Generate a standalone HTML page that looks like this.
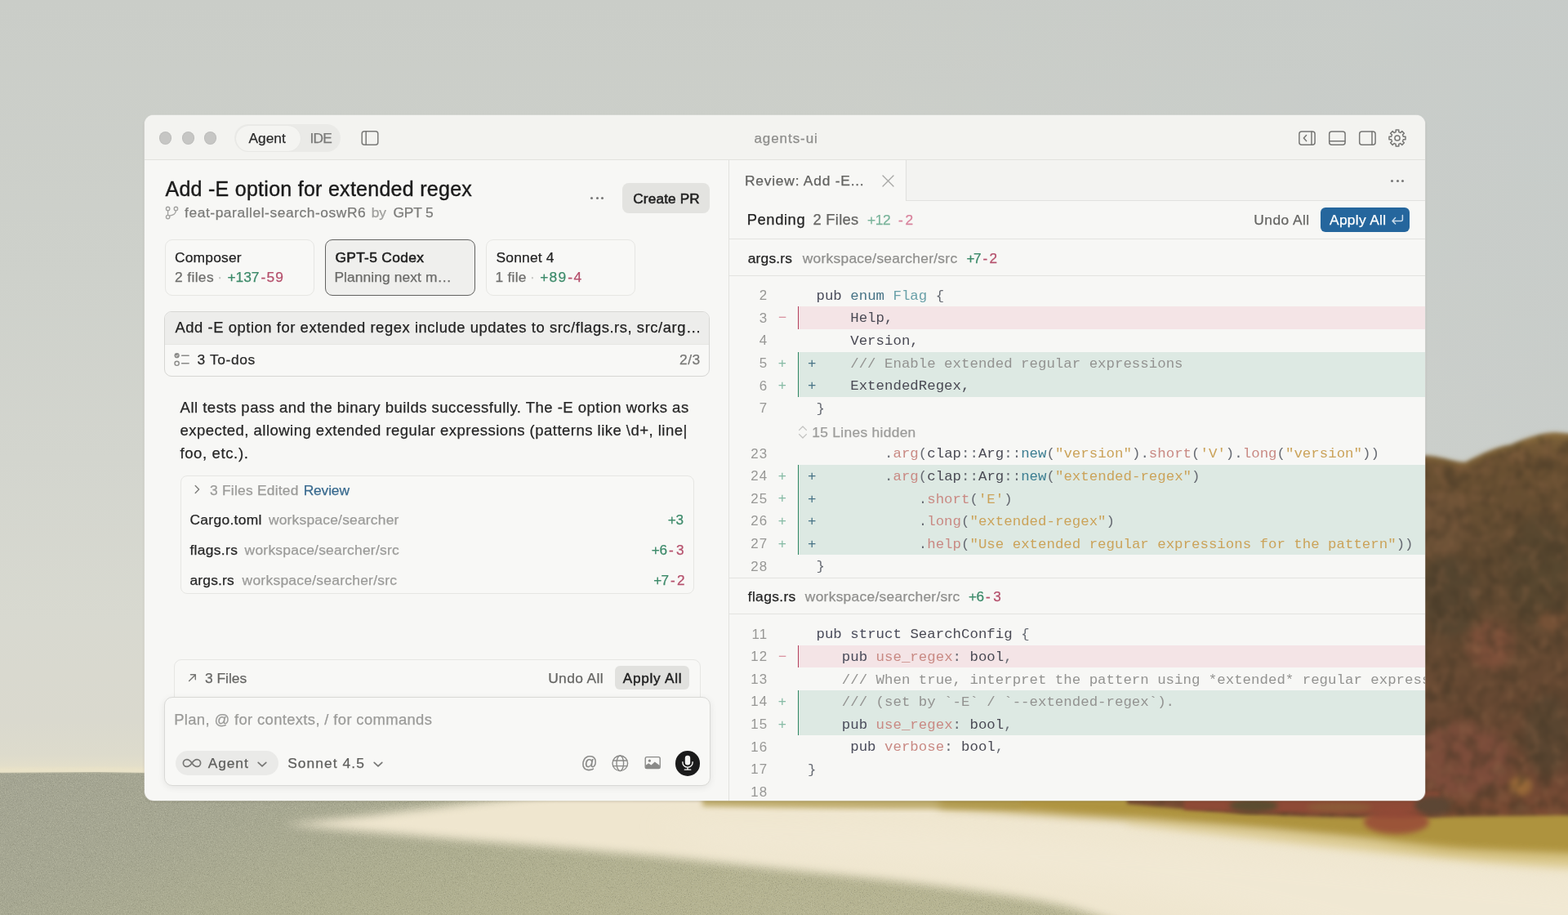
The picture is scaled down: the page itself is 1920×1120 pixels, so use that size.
<!DOCTYPE html>
<html lang="en">
<head>
<meta charset="utf-8">
<title>agents-ui</title>
<style>
*{box-sizing:border-box;margin:0;padding:0}
html,body{width:1920px;height:1120px;overflow:hidden;background:#cbcdc6}
body{font-family:"Liberation Sans",Arial,sans-serif;color:#232323;position:relative}
#bg{position:absolute;left:0;top:0;width:1920px;height:1120px;display:block}
#win{position:absolute;left:177px;top:141px;width:1568px;height:839px;border-radius:11px;background:#f7f7f5;overflow:hidden;will-change:transform;box-shadow:0 0 0 1px rgba(255,255,255,.25),0 1px 3px rgba(40,30,10,.22)}
#titlebar,#left,#right{position:absolute;left:0;top:0;width:1568px;height:839px;pointer-events:none}
.t{position:absolute;white-space:pre;display:block;-webkit-text-stroke:0.25px currentColor}
.b{position:absolute;display:block}
.mono{font-family:"Liberation Mono","DejaVu Sans Mono",monospace}
.row{position:absolute;left:716px;width:852px;height:27.6px}
.ln{position:absolute;white-space:pre;display:block;text-align:right}
.code{position:absolute;white-space:pre;display:block;font-family:"Liberation Mono","DejaVu Sans Mono",monospace}
.k{color:#4a4c5b}.k2{color:#477386}.ty{color:#69a0a8}.p{color:#676b73}.c{color:#939391}
.f{color:#c98a84}.s{color:#cba35a}.n{color:#3b7d91}.d{color:#4a4a54}

</style>
</head>
<body>
<svg id="bg" width="1920" height="1120" viewBox="0 0 1920 1120" color-interpolation-filters="sRGB">
<defs>
<linearGradient id="sky" x1="0" y1="0" x2="0" y2="1">
<stop offset="0" stop-color="#cacdc8"/><stop offset="0.3" stop-color="#ced1cb"/><stop offset="0.5" stop-color="#d3d5ce"/><stop offset="0.68" stop-color="#d8d9d0"/><stop offset="0.79" stop-color="#dad9ce"/><stop offset="0.825" stop-color="#dddbcc"/><stop offset="0.843" stop-color="#e6e0c9"/>
</linearGradient>
<linearGradient id="skyr" x1="0" y1="0" x2="1" y2="0">
<stop offset="0.55" stop-color="#c6cbc9" stop-opacity="0"/><stop offset="1" stop-color="#c6cbc9" stop-opacity="0.75"/>
</linearGradient>
<linearGradient id="gnd" x1="0" y1="0" x2="1" y2="0.25">
<stop offset="0" stop-color="#a3a493"/><stop offset="0.2" stop-color="#a6a792"/><stop offset="0.4" stop-color="#aeae90"/><stop offset="0.6" stop-color="#b5b391"/><stop offset="1" stop-color="#bab794"/>
</linearGradient>
<linearGradient id="tree" x1="0" y1="0" x2="0" y2="1">
<stop offset="0" stop-color="#7d6139"/><stop offset="0.07" stop-color="#6b5132"/><stop offset="0.35" stop-color="#604a31"/><stop offset="0.7" stop-color="#664832"/><stop offset="0.92" stop-color="#714833"/><stop offset="1" stop-color="#7a4b33"/>
</linearGradient>
<filter id="b2" x="-10%" y="-30%" width="120%" height="160%"><feGaussianBlur stdDeviation="2"/></filter>
<filter id="b3" x="-10%" y="-30%" width="120%" height="160%"><feGaussianBlur stdDeviation="3"/></filter>
<filter id="b6" x="-10%" y="-30%" width="120%" height="160%"><feGaussianBlur stdDeviation="6"/></filter>
<filter id="b14" x="-20%" y="-30%" width="140%" height="160%"><feGaussianBlur stdDeviation="14"/></filter>
<filter id="grainD" x="0" y="0" width="100%" height="100%">
<feTurbulence type="fractalNoise" baseFrequency="0.75" numOctaves="2" seed="7"/>
<feColorMatrix type="matrix" values="0 0 0 0 0.50  0 0 0 0 0.50  0 0 0 0 0.42  3 0 0 0 -1.55"/>
</filter>
<filter id="grainL" x="0" y="0" width="100%" height="100%">
<feTurbulence type="fractalNoise" baseFrequency="0.75" numOctaves="2" seed="19"/>
<feColorMatrix type="matrix" values="0 0 0 0 0.80  0 0 0 0 0.80  0 0 0 0 0.70  3 0 0 0 -1.55"/>
</filter>
<filter id="leaf" x="0" y="0" width="100%" height="100%">
<feTurbulence type="fractalNoise" baseFrequency="0.06 0.05" numOctaves="4" seed="11"/>
<feColorMatrix type="matrix" values="0 0 0 0 0.27  0 0 0 0 0.22  0 0 0 0 0.15  2.6 0 0 0 -1.1"/>
</filter>
<filter id="leaf2" x="0" y="0" width="100%" height="100%">
<feTurbulence type="fractalNoise" baseFrequency="0.07 0.06" numOctaves="4" seed="31"/>
<feColorMatrix type="matrix" values="0 0 0 0 0.56  0 0 0 0 0.40  0 0 0 0 0.28  0 2.6 0 0 -1.25"/>
</filter>
<clipPath id="tc"><path d="M1380 984 L1380 600 C1500 570 1650 556 1745 558 C1770 560 1785 568 1795 566 C1815 556 1830 548 1850 545 C1870 536 1890 530 1905 530 L1960 534 L1960 998 C1900 998 1830 999 1770 1000 C1700 1003 1600 1000 1520 996 C1470 992 1420 988 1380 984Z"/></clipPath>
</defs>
<rect width="1920" height="1120" fill="url(#sky)"/>
<rect width="1920" height="620" fill="url(#skyr)"/>
<!-- ground -->
<path d="M-20 946 L120 945 L260 947 L330 943 L400 946 L560 948 L1920 960 L1920 1140 L-20 1140Z" fill="url(#gnd)"/>
<path d="M-20 943 L120 942 L260 944 L330 940 L400 943 L560 945" fill="none" stroke="#ede5c6" stroke-width="4" opacity="0.8" filter="url(#b2)"/>
<g opacity="0.5"><rect x="0" y="946" width="1920" height="174" filter="url(#grainD)"/><rect x="0" y="946" width="1920" height="174" filter="url(#grainL)"/></g>
<!-- sand -->
<path d="M345 1009 C420 1003 500 992 600 980 L700 968 L1960 960 L1960 1160 L1440 1160 C1380 1130 1320 1112 1280 1104 C1180 1086 1060 1074 960 1064 C850 1052 740 1042 640 1034 C540 1026 430 1016 345 1009Z" fill="#efe6cf" filter="url(#b6)"/>
<path d="M800 1010 C1000 1000 1300 1020 1600 1050 C1750 1066 1850 1074 1960 1086 L1960 1160 L1700 1160 C1500 1100 1200 1060 900 1040Z" fill="#f2ead6" opacity="0.6" filter="url(#b14)"/>
<!-- golden grass band -->
<path d="M1150 972 L1960 972 L1960 1050 C1900 1048 1840 1046 1780 1042 C1740 1038 1700 1032 1670 1028 C1630 1024 1590 1020 1560 1017 C1500 1012 1450 1008 1400 1004 C1300 998 1220 992 1150 988Z" fill="#ae933e" filter="url(#b6)"/>
<path d="M1380 1004 C1500 1012 1700 1030 1800 1040 L1960 1046 L1960 1064 C1860 1062 1700 1046 1380 1008Z" fill="#d0b968" opacity="0.6" filter="url(#b6)"/>
<path d="M860 974 L1250 974 L1250 989 C1150 991 1000 990 860 987Z" fill="#b09a4e" opacity="0.75" filter="url(#b3)"/>
<!-- trees -->
<g filter="url(#b2)">
<path d="M1380 984 L1380 600 C1500 570 1650 556 1745 558 C1770 560 1785 568 1795 566 C1815 556 1830 548 1850 545 C1870 536 1890 530 1905 530 L1960 534 L1960 998 C1900 998 1830 999 1770 1000 C1700 1003 1600 1000 1520 996 C1470 992 1420 988 1380 984Z" fill="url(#tree)"/>
<g clip-path="url(#tc)">
<ellipse cx="1825" cy="790" rx="28" ry="30" fill="#905540" opacity="0.6" filter="url(#b6)"/>
<ellipse cx="1790" cy="930" rx="60" ry="45" fill="#865040" opacity="0.6" filter="url(#b6)"/>
<ellipse cx="1775" cy="730" rx="35" ry="50" fill="#514430" opacity="0.7" filter="url(#b6)"/>
<ellipse cx="1885" cy="700" rx="40" ry="70" fill="#53452f" opacity="0.65" filter="url(#b6)"/>
<ellipse cx="1895" cy="900" rx="30" ry="50" fill="#514430" opacity="0.65" filter="url(#b6)"/>
<ellipse cx="1862" cy="962" rx="14" ry="12" fill="#a8763a" opacity="0.7" filter="url(#b3)"/>
<ellipse cx="1900" cy="760" rx="18" ry="12" fill="#8a5a3c" opacity="0.6" filter="url(#b3)"/>
<ellipse cx="1770" cy="640" rx="30" ry="40" fill="#7a5a3e" opacity="0.5" filter="url(#b6)"/>
<rect x="1380" y="520" width="580" height="490" filter="url(#leaf)" opacity="0.55"/>
<rect x="1380" y="520" width="580" height="490" filter="url(#leaf2)" opacity="0.4"/>
</g>
</g>
<path d="M1745 560 C1770 562 1785 570 1795 568 C1815 558 1830 550 1850 547 C1870 538 1890 532 1905 532 L1925 534" fill="none" stroke="#9c7d42" stroke-width="5" opacity="0.5" filter="url(#b3)"/>
<!-- shrubs under window -->
<path d="M1450 970 L1762 970 L1762 992 C1700 997 1600 996 1450 991Z" fill="#8e4a36" filter="url(#b2)"/>
<ellipse cx="1535" cy="986" rx="30" ry="8" fill="#5a4c30" filter="url(#b3)"/>
<ellipse cx="1640" cy="988" rx="40" ry="6" fill="#8a6238" opacity="0.7" filter="url(#b3)"/>
<ellipse cx="1754" cy="986" rx="22" ry="12" fill="#5c4634" filter="url(#b3)"/>
<ellipse cx="1710" cy="1006" rx="40" ry="15" fill="#984a38" opacity="0.85" filter="url(#b3)"/>
</svg>
<div id="win">
<header id="titlebar">
<div class="b" style="left:0.00px;top:0.00px;width:1568.00px;height:55.20px;background:#f3f3f0;border-bottom:1px solid #e2e2de;"></div>
<div class="b" style="left:18.00px;top:20.40px;width:15.20px;height:15.20px;border-radius:50%;background:#c6c6c4;box-shadow:inset 0 0 0 1px rgba(0,0,0,.05);"></div>
<div class="b" style="left:45.70px;top:20.40px;width:15.20px;height:15.20px;border-radius:50%;background:#c6c6c4;box-shadow:inset 0 0 0 1px rgba(0,0,0,.05);"></div>
<div class="b" style="left:73.30px;top:20.40px;width:15.20px;height:15.20px;border-radius:50%;background:#c6c6c4;box-shadow:inset 0 0 0 1px rgba(0,0,0,.05);"></div>
<div class="b" style="left:110.00px;top:11.30px;width:129.60px;height:33.60px;border-radius:17px;background:#eaeae7;"></div>
<div class="b" style="left:111.50px;top:12.60px;width:79.00px;height:31.00px;border-radius:15.5px;background:#f4f4f1;box-shadow:0 0 1.5px rgba(0,0,0,.05);"></div>
<span class="t" style="left:127.40px;top:17.00px;font-size:17.3px;line-height:22px;color:#2a2a2a;letter-spacing:0.060px;">Agent</span>
<span class="t" style="left:202.60px;top:17.00px;font-size:17.3px;line-height:22px;color:#7a7a78;letter-spacing:-0.791px;">IDE</span>
<svg class="b" style="left:264.00px;top:17.00px;" width="24" height="22" viewBox="0 0 24 22"><rect x="2.2" y="2.8" width="19.6" height="16.4" rx="3" fill="none" stroke="#7a7a78" stroke-width="1.5"/><path d="M7.2 3v16" stroke="#7a7a78" stroke-width="1.5"/></svg>
<span class="t" style="left:746.50px;top:17.60px;font-size:17px;line-height:21px;color:#8d8d8b;letter-spacing:0.918px;">agents-ui</span>
<svg class="b" style="left:1412.00px;top:17.00px;" width="24" height="22" viewBox="0 0 24 22"><rect x="1.9" y="3" width="19.2" height="16.2" rx="3" fill="none" stroke="#777775" stroke-width="1.5" stroke-linecap="round" stroke-linejoin="round"/><path d="M17 3.2v15.8" fill="none" stroke="#777775" stroke-width="1.5" stroke-linecap="round" stroke-linejoin="round"/><path d="M10.6 7.6L7.4 11.1l3.2 3.5" fill="none" stroke="#777775" stroke-width="1.5" stroke-linecap="round" stroke-linejoin="round"/></svg>
<svg class="b" style="left:1449.00px;top:17.00px;" width="24" height="22" viewBox="0 0 24 22"><rect x="1.7" y="3" width="19.4" height="16.2" rx="3" fill="none" stroke="#777775" stroke-width="1.5" stroke-linecap="round" stroke-linejoin="round"/><path d="M1.9 14.8h19" fill="none" stroke="#777775" stroke-width="1.5" stroke-linecap="round" stroke-linejoin="round"/></svg>
<svg class="b" style="left:1486.00px;top:17.00px;" width="24" height="22" viewBox="0 0 24 22"><rect x="1.7" y="3" width="19.4" height="16.2" rx="3" fill="none" stroke="#777775" stroke-width="1.5" stroke-linecap="round" stroke-linejoin="round"/><path d="M17 3.2v15.8" fill="none" stroke="#777775" stroke-width="1.5" stroke-linecap="round" stroke-linejoin="round"/></svg>
<svg class="b" style="left:1522.00px;top:16.00px;" width="24" height="24" viewBox="0 0 24 24"><path d="M10.17 1.97 L13.83 1.97 L13.83 4.62 L15.92 5.49 L17.80 3.61 L20.39 6.20 L18.51 8.08 L19.38 10.17 L22.03 10.17 L22.03 13.83 L19.38 13.83 L18.51 15.92 L20.39 17.80 L17.80 20.39 L15.92 18.51 L13.83 19.38 L13.83 22.03 L10.17 22.03 L10.17 19.38 L8.08 18.51 L6.20 20.39 L3.61 17.80 L5.49 15.92 L4.62 13.83 L1.97 13.83 L1.97 10.17 L4.62 10.17 L5.49 8.08 L3.61 6.20 L6.20 3.61 L8.08 5.49 L10.17 4.62Z" fill="none" stroke="#777775" stroke-width="1.5" stroke-linecap="round" stroke-linejoin="round"/><circle cx="12" cy="12" r="3.1" fill="none" stroke="#777775" stroke-width="1.5" stroke-linecap="round" stroke-linejoin="round"/></svg>
</header>
<section id="left">
<div class="b" style="left:714.90px;top:55.00px;width:1.40px;height:784.00px;background:#e2e2df;"></div>
<h1 class="t" style="left:25.50px;top:74.80px;font-size:25px;line-height:31px;color:#1b1b1b;letter-spacing:0.271px;font-weight:400;-webkit-text-stroke:0.4px #1b1b1b;">Add -E option for extended regex</h1>
<svg class="b" style="left:24.00px;top:110.00px;" width="19" height="19" viewBox="0 0 19 19"><circle cx="4.6" cy="4.4" r="2.2" fill="none" stroke="#a3a3a1" stroke-width="1.4" stroke-linecap="round" stroke-linejoin="round"/><circle cx="14.4" cy="4.4" r="2.2" fill="none" stroke="#a3a3a1" stroke-width="1.4" stroke-linecap="round" stroke-linejoin="round"/><circle cx="4.6" cy="14.6" r="2.2" fill="none" stroke="#a3a3a1" stroke-width="1.4" stroke-linecap="round" stroke-linejoin="round"/><path d="M4.6 6.6v5.8" fill="none" stroke="#a3a3a1" stroke-width="1.4" stroke-linecap="round" stroke-linejoin="round"/><path d="M14.4 6.6c0 4.2-2.6 5.2-7.6 6.6" fill="none" stroke="#a3a3a1" stroke-width="1.4" stroke-linecap="round" stroke-linejoin="round"/></svg>
<span class="t" style="left:49.10px;top:108.20px;font-size:17.4px;line-height:22px;color:#7b7b79;letter-spacing:0.551px;">feat-parallel-search-oswR6</span>
<span class="t" style="left:277.80px;top:108.20px;font-size:17.4px;line-height:22px;color:#a0a09e;letter-spacing:-0.172px;">by</span>
<span class="t" style="left:304.40px;top:108.20px;font-size:17.4px;line-height:22px;color:#7b7b79;letter-spacing:-0.195px;">GPT 5</span>
<div class="b" style="left:546.00px;top:100.00px;width:3.00px;height:3.00px;border-radius:50%;background:#777;"></div>
<div class="b" style="left:552.50px;top:100.00px;width:3.00px;height:3.00px;border-radius:50%;background:#777;"></div>
<div class="b" style="left:559.00px;top:100.00px;width:3.00px;height:3.00px;border-radius:50%;background:#777;"></div>
<div class="b" style="left:585.00px;top:83.30px;width:107.00px;height:36.40px;border-radius:8px;background:#e3e3e0;"></div>
<span class="t" style="left:598.30px;top:90.80px;font-size:17.2px;line-height:22px;color:#1f1f1f;letter-spacing:0.147px;-webkit-text-stroke:0.55px #1f1f1f;">Create PR</span>
<div class="b" style="left:25.00px;top:151.50px;width:183.00px;height:69.50px;border-radius:9px;border:1.5px solid #e6e6e3;background:#f8f8f6;"></div>
<span class="t" style="left:37.00px;top:163.30px;font-size:17.4px;line-height:22px;color:#242424;letter-spacing:0.196px;">Composer</span>
<span class="t" style="left:37.00px;top:187.20px;font-size:17.4px;line-height:22px;color:#6f6f6d;letter-spacing:0.361px;">2 files</span>
<span class="t" style="left:89.30px;top:187.20px;font-size:17.4px;line-height:22px;color:#c4c4c2;">·</span>
<span class="t" style="left:101.50px;top:187.20px;font-size:17.4px;line-height:22px;color:#3e8b6b;letter-spacing:-0.100px;">+137</span>
<span class="t" style="left:142.60px;top:187.20px;font-size:17.4px;line-height:22px;color:#b5506c;letter-spacing:1.118px;">-59</span>
<div class="b" style="left:221.30px;top:151.50px;width:183.40px;height:69.50px;border-radius:9px;border:1.8px solid #626260;background:#efefed;"></div>
<span class="t" style="left:233.40px;top:163.30px;font-size:17.4px;line-height:22px;color:#1d1d1d;letter-spacing:0.314px;-webkit-text-stroke:0.55px #1d1d1d;">GPT-5 Codex</span>
<span class="t" style="left:232.40px;top:187.20px;font-size:17.4px;line-height:22px;color:#6a6a68;letter-spacing:0.093px;">Planning next m…</span>
<div class="b" style="left:418.30px;top:151.50px;width:182.70px;height:69.50px;border-radius:9px;border:1.5px solid #e6e6e3;background:#f8f8f6;"></div>
<span class="t" style="left:430.50px;top:163.30px;font-size:17.4px;line-height:22px;color:#242424;letter-spacing:0.193px;">Sonnet 4</span>
<span class="t" style="left:429.50px;top:187.20px;font-size:17.4px;line-height:22px;color:#6f6f6d;letter-spacing:0.247px;">1 file</span>
<span class="t" style="left:472.00px;top:187.20px;font-size:17.4px;line-height:22px;color:#c4c4c2;">·</span>
<span class="t" style="left:484.20px;top:187.20px;font-size:17.4px;line-height:22px;color:#3e8b6b;letter-spacing:1.236px;">+89</span>
<span class="t" style="left:518.30px;top:187.20px;font-size:17.4px;line-height:22px;color:#b5506c;letter-spacing:1.409px;">-4</span>
<div class="b" style="left:24.40px;top:240.20px;width:667.40px;height:79.60px;border-radius:9px;border:1.5px solid #d6d6d3;background:#f8f8f6;overflow:hidden;"><div style="position:absolute;left:0;top:0;right:0;height:39.5px;background:#ededeb;border-bottom:1px solid #e6e6e3"></div></div>
<span class="t" style="left:37.40px;top:248.00px;font-size:18.4px;line-height:23px;color:#222;letter-spacing:0.560px;">Add -E option for extended regex include updates to src/flags.rs, src/arg…</span>
<svg class="b" style="left:35.00px;top:288.70px;" width="22" height="21" viewBox="0 0 22 21"><circle cx="4.6" cy="5.2" r="3.1" fill="#8a8a88"/><path d="M3.2 5.3l1 1 1.8-2" fill="none" stroke="#f8f8f6" stroke-width="1"/><circle cx="4.6" cy="14.8" r="2.6" fill="none" stroke="#8a8a88" stroke-width="1.4" stroke-linecap="round"/><path d="M10.6 5.2h8.6M10.6 14.8h8.6" fill="none" stroke="#8a8a88" stroke-width="1.4" stroke-linecap="round"/></svg>
<span class="t" style="left:64.60px;top:287.50px;font-size:17.4px;line-height:22px;color:#2b2b2b;letter-spacing:0.599px;">3 To-dos</span>
<span class="t" style="left:655.00px;top:287.60px;font-size:17.4px;line-height:22px;color:#777775;letter-spacing:0.498px;">2/3</span>
<p class="t" style="left:43.60px;top:346.40px;font-size:18.5px;line-height:23px;color:#262626;letter-spacing:0.487px;">All tests pass and the binary builds successfully. The -E option works as</p>
<p class="t" style="left:43.40px;top:374.00px;font-size:18.5px;line-height:23px;color:#262626;letter-spacing:0.480px;">expected, allowing extended regular expressions (patterns like \d+, line|</p>
<p class="t" style="left:43.40px;top:401.60px;font-size:18.5px;line-height:23px;color:#262626;letter-spacing:0.632px;">foo, etc.).</p>
<div class="b" style="left:44.00px;top:440.80px;width:628.80px;height:145.10px;border-radius:8px;border:1.3px solid #e6e6e3;background:#f8f8f6;"></div>
<svg class="b" style="left:57.00px;top:450.00px;" width="16" height="16" viewBox="0 0 16 16"><path d="M5.2 3.6L9.6 8l-4.4 4.4" fill="none" stroke="#7d7d7b" stroke-width="1.4" stroke-linecap="round" stroke-linejoin="round"/></svg>
<span class="t" style="left:80.00px;top:447.90px;font-size:17.4px;line-height:22px;color:#9b9b99;letter-spacing:0.231px;">3 Files Edited</span>
<span class="t" style="left:194.70px;top:447.90px;font-size:17.4px;line-height:22px;color:#3a6b8f;letter-spacing:-0.152px;">Review</span>
<span class="t" style="left:55.40px;top:484.30px;font-size:17.4px;line-height:22px;color:#262626;letter-spacing:0.324px;">Cargo.toml</span>
<span class="t" style="left:151.90px;top:484.30px;font-size:17.4px;line-height:22px;color:#9b9b99;letter-spacing:0.228px;">workspace/searcher</span>
<span class="t" style="left:640.70px;top:484.30px;font-size:17.2px;line-height:22px;color:#3e8b6b;letter-spacing:-0.137px;">+3</span>
<span class="t" style="left:55.40px;top:521.00px;font-size:17.4px;line-height:22px;color:#262626;letter-spacing:0.349px;">flags.rs</span>
<span class="t" style="left:122.60px;top:521.00px;font-size:17.4px;line-height:22px;color:#9b9b99;letter-spacing:0.260px;">workspace/searcher/src</span>
<span class="t" style="left:620.70px;top:521.00px;font-size:17.2px;line-height:22px;color:#3e8b6b;letter-spacing:-0.337px;">+6</span>
<span class="t" style="left:642.00px;top:521.00px;font-size:17.2px;line-height:22px;color:#b5506c;letter-spacing:3.276px;">-3</span>
<span class="t" style="left:55.40px;top:557.80px;font-size:17.4px;line-height:22px;color:#262626;letter-spacing:0.208px;">args.rs</span>
<span class="t" style="left:119.60px;top:557.80px;font-size:17.4px;line-height:22px;color:#9b9b99;letter-spacing:0.275px;">workspace/searcher/src</span>
<span class="t" style="left:623.30px;top:557.80px;font-size:17.2px;line-height:22px;color:#3e8b6b;letter-spacing:-0.837px;">+7</span>
<span class="t" style="left:644.00px;top:557.80px;font-size:17.2px;line-height:22px;color:#b5506c;letter-spacing:2.176px;">-2</span>
<div class="b" style="left:35.80px;top:666.40px;width:644.80px;height:62.60px;border-radius:9px 9px 0 0;border:1.3px solid #e6e6e3;background:#f8f8f6;"></div>
<svg class="b" style="left:51.00px;top:681.00px;" width="16" height="16" viewBox="0 0 16 16"><path d="M3.6 11.6L11 4.2M5.4 3.8h5.9v5.9" fill="none" stroke="#777775" stroke-width="1.4" stroke-linecap="round" stroke-linejoin="round"/></svg>
<span class="t" style="left:74.00px;top:677.60px;font-size:17.4px;line-height:22px;color:#666664;letter-spacing:-0.004px;">3 Files</span>
<span class="t" style="left:494.20px;top:677.60px;font-size:17.4px;line-height:22px;color:#666664;letter-spacing:0.376px;">Undo All</span>
<div class="b" style="left:575.90px;top:673.70px;width:91.60px;height:29.60px;border-radius:6px;background:#e1e1de;"></div>
<span class="t" style="left:585.70px;top:677.60px;font-size:17.2px;line-height:22px;color:#1f1f1f;letter-spacing:0.744px;-webkit-text-stroke:0.45px #1f1f1f;">Apply All</span>
<div class="b" style="left:23.80px;top:712.10px;width:669.40px;height:109.00px;border-radius:10px;border:1.5px solid #d9d9d6;background:#f8f8f6;box-shadow:0 2px 8px rgba(0,0,0,.08);"></div>
<span class="t" style="left:36.20px;top:728.00px;font-size:18.4px;line-height:23px;color:#9b9b99;letter-spacing:0.368px;">Plan, @ for contexts, / for commands</span>
<div class="b" style="left:38.00px;top:778.00px;width:126.40px;height:29.60px;border-radius:15px;background:#eaeae8;"></div>
<svg class="b" style="left:45.00px;top:785.00px;" width="26" height="16" viewBox="0 0 26 16"><path d="M13 8c-1.8-2.6-3.6-4.4-6.2-4.4a4.4 4.4 0 0 0 0 8.8c2.6 0 4.4-1.8 6.2-4.4zm0 0c1.8 2.6 3.6 4.4 6.2 4.4a4.4 4.4 0 0 0 0-8.8c-2.6 0-4.4 1.8-6.2 4.4z" fill="none" stroke="#777775" stroke-width="1.7" stroke-linecap="round" stroke-linejoin="round"/></svg>
<span class="t" style="left:77.70px;top:782.30px;font-size:17.4px;line-height:22px;color:#5f5f5d;letter-spacing:0.896px;">Agent</span>
<svg class="b" style="left:136.00px;top:786.00px;" width="16" height="16" viewBox="0 0 16 16"><path d="M3.2 6.4L8 10.8l4.8-4.4" fill="none" stroke="#777775" stroke-width="1.7" stroke-linecap="round" stroke-linejoin="round"/></svg>
<span class="t" style="left:175.20px;top:782.30px;font-size:17.4px;line-height:22px;color:#5f5f5d;letter-spacing:1.061px;">Sonnet 4.5</span>
<svg class="b" style="left:277.50px;top:786.00px;" width="16" height="16" viewBox="0 0 16 16"><path d="M3.2 6.4L8 10.8l4.8-4.4" fill="none" stroke="#777775" stroke-width="1.7" stroke-linecap="round" stroke-linejoin="round"/></svg>
<span class="t" style="left:534.80px;top:779.80px;font-size:19.5px;line-height:24px;color:#8a8a88;">@</span>
<svg class="b" style="left:570.50px;top:781.70px;" width="23" height="23" viewBox="0 0 23 23"><circle cx="11.3" cy="11.3" r="9.3" fill="none" stroke="#8a8a88" stroke-width="1.4" stroke-linecap="round" stroke-linejoin="round"/><ellipse cx="11.3" cy="11.3" rx="4.3" ry="9.3" fill="none" stroke="#8a8a88" stroke-width="1.4" stroke-linecap="round" stroke-linejoin="round"/><path d="M2.8 8h17M2.8 14.6h17" fill="none" stroke="#8a8a88" stroke-width="1.4" stroke-linecap="round" stroke-linejoin="round"/></svg>
<svg class="b" style="left:610.50px;top:783.00px;" width="23" height="20" viewBox="0 0 23 20"><rect x="2.2" y="2.6" width="18" height="14" rx="1.8" fill="none" stroke="#8a8a88" stroke-width="1.4" stroke-linecap="round" stroke-linejoin="round"/><circle cx="7.4" cy="7.2" r="1.6" fill="#8a8a88"/><path d="M2.6 16.2v-3.4l3.6-2.6 3.2 2.2 4.4-4 6 4.6v3.2z" fill="#8a8a88"/></svg>
<div class="b" style="left:649.60px;top:778.00px;width:30.60px;height:30.50px;border-radius:50%;background:#1b1b1b;"></div>
<svg class="b" style="left:654.90px;top:783.20px;" width="20" height="20" viewBox="0 0 20 20"><rect x="6.8" y="0.8" width="6.4" height="11.6" rx="3.2" fill="#f5f5f3"/><path d="M3.9 8.8v0.6a6.1 5.7 0 0 0 12.2 0v-0.6M10 15.2v2.8M6.2 18.1h7.6" fill="none" stroke="#f5f5f3" stroke-width="1.4" stroke-linecap="round"/></svg>
</section>
<section id="right">
<div class="b" style="left:716.20px;top:55.00px;width:851.80px;height:49.90px;background:#f3f3f1;border-bottom:1.4px solid #e2e2df;"></div>
<div class="b" style="left:716.20px;top:55.00px;width:217.00px;height:49.90px;background:#f7f7f5;border-right:1.4px solid #e0e0dd;"></div>
<span class="t" style="left:735.00px;top:69.00px;font-size:17.4px;line-height:22px;color:#626260;letter-spacing:0.768px;">Review: Add -E...</span>
<svg class="b" style="left:901.00px;top:70.60px;" width="19" height="19" viewBox="0 0 19 19"><path d="M3 3l13 13M16 3L3 16" fill="none" stroke="#a6a6a4" stroke-width="1.3" stroke-linecap="round"/></svg>
<div class="b" style="left:1526.30px;top:78.50px;width:3.00px;height:3.00px;border-radius:50%;background:#777;"></div>
<div class="b" style="left:1532.70px;top:78.50px;width:3.00px;height:3.00px;border-radius:50%;background:#777;"></div>
<div class="b" style="left:1539.10px;top:78.50px;width:3.00px;height:3.00px;border-radius:50%;background:#777;"></div>
<div class="b" style="left:716.20px;top:151.00px;width:851.80px;height:1.40px;background:#e3e3e0;"></div>
<span class="t" style="left:737.70px;top:115.90px;font-size:18.4px;line-height:23px;color:#242424;letter-spacing:0.573px;">Pending</span>
<span class="t" style="left:818.50px;top:115.90px;font-size:18.4px;line-height:23px;color:#666664;letter-spacing:0.255px;">2 Files</span>
<span class="t" style="left:885.00px;top:116.90px;font-size:17.4px;line-height:22px;color:#7ab49b;letter-spacing:-0.414px;">+12</span>
<span class="t" style="left:923.00px;top:116.90px;font-size:17.4px;line-height:22px;color:#d8829c;letter-spacing:2.609px;">-2</span>
<span class="t" style="left:1358.30px;top:116.90px;font-size:17.4px;line-height:22px;color:#666664;letter-spacing:0.433px;">Undo All</span>
<div class="b" style="left:1440.40px;top:112.80px;width:108.60px;height:29.90px;border-radius:6px;background:#25669d;"></div>
<span class="t" style="left:1451.00px;top:116.90px;font-size:17.4px;line-height:22px;color:#ffffff;letter-spacing:0.300px;">Apply All</span>
<svg class="b" style="left:1525.00px;top:120.00px;" width="18" height="16" viewBox="0 0 18 16"><path d="M15.4 2.6v5.2a1.6 1.6 0 0 1-1.6 1.6H3.2M6.6 5.6L3 9.4l3.6 3.6" fill="none" stroke="#c9dcec" stroke-width="1.5" stroke-linecap="round" stroke-linejoin="round"/></svg>
<div class="b" style="left:716.20px;top:195.70px;width:851.80px;height:1.40px;background:#e3e3e0;"></div>
<span class="t" style="left:738.70px;top:163.60px;font-size:17.4px;line-height:22px;color:#242424;letter-spacing:0.191px;">args.rs</span>
<span class="t" style="left:805.70px;top:163.60px;font-size:17.4px;line-height:22px;color:#8f8f8d;letter-spacing:0.275px;">workspace/searcher/src</span>
<span class="t" style="left:1006.40px;top:163.60px;font-size:17.2px;line-height:22px;color:#3e8b6b;letter-spacing:-1.437px;">+7</span>
<span class="t" style="left:1026.50px;top:163.60px;font-size:17.2px;line-height:22px;color:#b5506c;letter-spacing:2.176px;">-2</span>
<span class="t" style="left:752.80px;top:210.10px;font-size:16.9px;line-height:21px;color:#989896;letter-spacing:1.1px;-webkit-text-stroke:0;">2</span>
<code class="code" style="left:812.00px;top:209.86px;font-size:17.42px;line-height:22px;letter-spacing:-0.002px;color:#35353d"> <span class="k">pub</span> <span class="k2">enum</span> <span class="ty">Flag</span><span class="p"> {</span></code>
<div class="b" style="left:800.00px;top:234.30px;width:768.00px;height:27.60px;background:#f4e4e6;"></div>
<div class="b" style="left:799.60px;top:234.30px;width:1.60px;height:27.60px;background:#b3405c;"></div>
<span class="t" style="left:776.00px;top:236.30px;font-size:17.4px;line-height:22px;color:#d9929f;-webkit-text-stroke:0;">−</span>
<span class="t" style="left:752.80px;top:237.70px;font-size:16.9px;line-height:21px;color:#989896;letter-spacing:1.1px;-webkit-text-stroke:0;">3</span>
<code class="code" style="left:812.00px;top:237.46px;font-size:17.42px;line-height:22px;letter-spacing:-0.002px;color:#35353d"><span class="d">     Help,</span></code>
<span class="t" style="left:752.80px;top:265.30px;font-size:16.9px;line-height:21px;color:#989896;letter-spacing:1.1px;-webkit-text-stroke:0;">4</span>
<code class="code" style="left:812.00px;top:265.06px;font-size:17.42px;line-height:22px;letter-spacing:-0.002px;color:#35353d"><span class="d">     Version,</span></code>
<div class="b" style="left:800.00px;top:289.50px;width:768.00px;height:27.60px;background:#dde9e3;"></div>
<div class="b" style="left:799.60px;top:289.50px;width:1.60px;height:27.60px;background:#2e8662;"></div>
<span class="t" style="left:775.80px;top:291.50px;font-size:17.4px;line-height:22px;color:#86bba5;-webkit-text-stroke:0;">+</span>
<span class="t" style="left:752.80px;top:292.90px;font-size:16.9px;line-height:21px;color:#989896;letter-spacing:1.1px;-webkit-text-stroke:0;">5</span>
<code class="code" style="left:812.00px;top:292.66px;font-size:17.42px;line-height:22px;letter-spacing:-0.002px;color:#35353d"><span class="k2">+</span><span class="c">    /// Enable extended regular expressions</span></code>
<div class="b" style="left:800.00px;top:317.10px;width:768.00px;height:27.60px;background:#dde9e3;"></div>
<div class="b" style="left:799.60px;top:317.10px;width:1.60px;height:27.60px;background:#2e8662;"></div>
<span class="t" style="left:775.80px;top:319.10px;font-size:17.4px;line-height:22px;color:#86bba5;-webkit-text-stroke:0;">+</span>
<span class="t" style="left:752.80px;top:320.50px;font-size:16.9px;line-height:21px;color:#989896;letter-spacing:1.1px;-webkit-text-stroke:0;">6</span>
<code class="code" style="left:812.00px;top:320.26px;font-size:17.42px;line-height:22px;letter-spacing:-0.002px;color:#35353d"><span class="k2">+</span><span class="d">    ExtendedRegex,</span></code>
<span class="t" style="left:752.80px;top:348.10px;font-size:16.9px;line-height:21px;color:#989896;letter-spacing:1.1px;-webkit-text-stroke:0;">7</span>
<code class="code" style="left:812.00px;top:347.86px;font-size:17.42px;line-height:22px;letter-spacing:-0.002px;color:#35353d"><span class="p"> }</span></code>
<svg class="b" style="left:798.00px;top:378.00px;" width="16" height="20" viewBox="0 0 16 20"><path d="M3.6 7.4L8 3l4.4 4.4M3.6 12.6L8 17l4.4-4.4" fill="none" stroke="#c2c2c0" stroke-width="1.3" stroke-linecap="round" stroke-linejoin="round"/></svg>
<span class="t" style="left:817.30px;top:377.00px;font-size:17.4px;line-height:22px;color:#9c9c9a;letter-spacing:0.298px;">15 Lines hidden</span>
<span class="t" style="left:742.31px;top:403.60px;font-size:16.9px;line-height:21px;color:#989896;letter-spacing:1.1px;-webkit-text-stroke:0;">23</span>
<code class="code" style="left:812.00px;top:403.36px;font-size:17.42px;line-height:22px;letter-spacing:-0.002px;color:#35353d">         <span class="p">.</span><span class="f">arg</span><span class="p">(</span><span class="d">clap</span><span class="p">::</span><span class="d">Arg</span><span class="p">::</span><span class="n">new</span><span class="p">(</span><span class="s">"version"</span><span class="p">).</span><span class="f">short</span><span class="p">(</span><span class="s">'V'</span><span class="p">).</span><span class="f">long</span><span class="p">(</span><span class="s">"version"</span><span class="p">))</span></code>
<div class="b" style="left:800.00px;top:427.80px;width:768.00px;height:27.60px;background:#dde9e3;"></div>
<div class="b" style="left:799.60px;top:427.80px;width:1.60px;height:27.60px;background:#2e8662;"></div>
<span class="t" style="left:775.80px;top:429.80px;font-size:17.4px;line-height:22px;color:#86bba5;-webkit-text-stroke:0;">+</span>
<span class="t" style="left:742.31px;top:431.20px;font-size:16.9px;line-height:21px;color:#989896;letter-spacing:1.1px;-webkit-text-stroke:0;">24</span>
<code class="code" style="left:812.00px;top:430.96px;font-size:17.42px;line-height:22px;letter-spacing:-0.002px;color:#35353d"><span class="k2">+</span>        <span class="p">.</span><span class="f">arg</span><span class="p">(</span><span class="d">clap</span><span class="p">::</span><span class="d">Arg</span><span class="p">::</span><span class="n">new</span><span class="p">(</span><span class="s">"extended-regex"</span><span class="p">)</span></code>
<div class="b" style="left:800.00px;top:455.40px;width:768.00px;height:27.60px;background:#dde9e3;"></div>
<div class="b" style="left:799.60px;top:455.40px;width:1.60px;height:27.60px;background:#2e8662;"></div>
<span class="t" style="left:775.80px;top:457.40px;font-size:17.4px;line-height:22px;color:#86bba5;-webkit-text-stroke:0;">+</span>
<span class="t" style="left:742.31px;top:458.80px;font-size:16.9px;line-height:21px;color:#989896;letter-spacing:1.1px;-webkit-text-stroke:0;">25</span>
<code class="code" style="left:812.00px;top:458.56px;font-size:17.42px;line-height:22px;letter-spacing:-0.002px;color:#35353d"><span class="k2">+</span>            <span class="p">.</span><span class="f">short</span><span class="p">(</span><span class="s">'E'</span><span class="p">)</span></code>
<div class="b" style="left:800.00px;top:483.00px;width:768.00px;height:27.60px;background:#dde9e3;"></div>
<div class="b" style="left:799.60px;top:483.00px;width:1.60px;height:27.60px;background:#2e8662;"></div>
<span class="t" style="left:775.80px;top:485.00px;font-size:17.4px;line-height:22px;color:#86bba5;-webkit-text-stroke:0;">+</span>
<span class="t" style="left:742.31px;top:486.40px;font-size:16.9px;line-height:21px;color:#989896;letter-spacing:1.1px;-webkit-text-stroke:0;">26</span>
<code class="code" style="left:812.00px;top:486.16px;font-size:17.42px;line-height:22px;letter-spacing:-0.002px;color:#35353d"><span class="k2">+</span>            <span class="p">.</span><span class="f">long</span><span class="p">(</span><span class="s">"extended-regex"</span><span class="p">)</span></code>
<div class="b" style="left:800.00px;top:510.60px;width:768.00px;height:27.60px;background:#dde9e3;"></div>
<div class="b" style="left:799.60px;top:510.60px;width:1.60px;height:27.60px;background:#2e8662;"></div>
<span class="t" style="left:775.80px;top:512.60px;font-size:17.4px;line-height:22px;color:#86bba5;-webkit-text-stroke:0;">+</span>
<span class="t" style="left:742.31px;top:514.00px;font-size:16.9px;line-height:21px;color:#989896;letter-spacing:1.1px;-webkit-text-stroke:0;">27</span>
<code class="code" style="left:812.00px;top:513.76px;font-size:17.42px;line-height:22px;letter-spacing:-0.002px;color:#35353d"><span class="k2">+</span>            <span class="p">.</span><span class="f">help</span><span class="p">(</span><span class="s">"Use extended regular expressions for the pattern"</span><span class="p">))</span></code>
<span class="t" style="left:742.31px;top:541.60px;font-size:16.9px;line-height:21px;color:#989896;letter-spacing:1.1px;-webkit-text-stroke:0;">28</span>
<code class="code" style="left:812.00px;top:541.36px;font-size:17.42px;line-height:22px;letter-spacing:-0.002px;color:#35353d"><span class="p"> }</span></code>
<div class="b" style="left:716.20px;top:566.00px;width:851.80px;height:1.40px;background:#e3e3e0;"></div>
<div class="b" style="left:716.20px;top:610.10px;width:851.80px;height:1.40px;background:#e3e3e0;"></div>
<span class="t" style="left:738.70px;top:578.00px;font-size:17.4px;line-height:22px;color:#242424;letter-spacing:0.363px;">flags.rs</span>
<span class="t" style="left:808.80px;top:578.00px;font-size:17.4px;line-height:22px;color:#8f8f8d;letter-spacing:0.279px;">workspace/searcher/src</span>
<span class="t" style="left:1009.00px;top:578.00px;font-size:17.2px;line-height:22px;color:#3e8b6b;letter-spacing:-0.537px;">+6</span>
<span class="t" style="left:1030.00px;top:578.00px;font-size:17.2px;line-height:22px;color:#b5506c;letter-spacing:3.576px;">-3</span>
<span class="t" style="left:743.56px;top:624.60px;font-size:16.9px;line-height:21px;color:#989896;letter-spacing:1.1px;-webkit-text-stroke:0;">11</span>
<code class="code" style="left:812.00px;top:624.36px;font-size:17.42px;line-height:22px;letter-spacing:-0.002px;color:#35353d"> <span class="k">pub</span> <span class="k">struct</span> <span class="d">SearchConfig</span><span class="p"> {</span></code>
<div class="b" style="left:800.00px;top:648.80px;width:768.00px;height:27.60px;background:#f4e4e6;"></div>
<div class="b" style="left:799.60px;top:648.80px;width:1.60px;height:27.60px;background:#b3405c;"></div>
<span class="t" style="left:776.00px;top:650.80px;font-size:17.4px;line-height:22px;color:#d9929f;-webkit-text-stroke:0;">−</span>
<span class="t" style="left:742.31px;top:652.20px;font-size:16.9px;line-height:21px;color:#989896;letter-spacing:1.1px;-webkit-text-stroke:0;">12</span>
<code class="code" style="left:812.00px;top:651.96px;font-size:17.42px;line-height:22px;letter-spacing:-0.002px;color:#35353d">    <span class="k">pub</span> <span class="f">use_regex</span><span class="p">: </span><span class="d">bool</span><span class="p">,</span></code>
<span class="t" style="left:742.31px;top:679.80px;font-size:16.9px;line-height:21px;color:#989896;letter-spacing:1.1px;-webkit-text-stroke:0;">13</span>
<code class="code" style="left:812.00px;top:679.56px;font-size:17.42px;line-height:22px;letter-spacing:-0.002px;color:#35353d"><span class="c">    /// When true, interpret the pattern using *extended* regular expressions</span></code>
<div class="b" style="left:800.00px;top:704.00px;width:768.00px;height:27.60px;background:#dde9e3;"></div>
<div class="b" style="left:799.60px;top:704.00px;width:1.60px;height:27.60px;background:#2e8662;"></div>
<span class="t" style="left:775.80px;top:706.00px;font-size:17.4px;line-height:22px;color:#86bba5;-webkit-text-stroke:0;">+</span>
<span class="t" style="left:742.31px;top:707.40px;font-size:16.9px;line-height:21px;color:#989896;letter-spacing:1.1px;-webkit-text-stroke:0;">14</span>
<code class="code" style="left:812.00px;top:707.16px;font-size:17.42px;line-height:22px;letter-spacing:-0.002px;color:#35353d"><span class="c">    /// (set by `-E` / `--extended-regex`).</span></code>
<div class="b" style="left:800.00px;top:731.60px;width:768.00px;height:27.60px;background:#dde9e3;"></div>
<div class="b" style="left:799.60px;top:731.60px;width:1.60px;height:27.60px;background:#2e8662;"></div>
<span class="t" style="left:775.80px;top:733.60px;font-size:17.4px;line-height:22px;color:#86bba5;-webkit-text-stroke:0;">+</span>
<span class="t" style="left:742.31px;top:735.00px;font-size:16.9px;line-height:21px;color:#989896;letter-spacing:1.1px;-webkit-text-stroke:0;">15</span>
<code class="code" style="left:812.00px;top:734.76px;font-size:17.42px;line-height:22px;letter-spacing:-0.002px;color:#35353d">    <span class="k">pub</span> <span class="f">use_regex</span><span class="p">: </span><span class="d">bool</span><span class="p">,</span></code>
<span class="t" style="left:742.31px;top:762.60px;font-size:16.9px;line-height:21px;color:#989896;letter-spacing:1.1px;-webkit-text-stroke:0;">16</span>
<code class="code" style="left:812.00px;top:762.36px;font-size:17.42px;line-height:22px;letter-spacing:-0.002px;color:#35353d">     <span class="k">pub</span> <span class="f">verbose</span><span class="p">: </span><span class="d">bool</span><span class="p">,</span></code>
<span class="t" style="left:742.31px;top:790.20px;font-size:16.9px;line-height:21px;color:#989896;letter-spacing:1.1px;-webkit-text-stroke:0;">17</span>
<code class="code" style="left:812.00px;top:789.96px;font-size:17.42px;line-height:22px;letter-spacing:-0.002px;color:#35353d"><span class="p">}</span></code>
<span class="t" style="left:742.31px;top:817.80px;font-size:16.9px;line-height:21px;color:#989896;letter-spacing:1.1px;-webkit-text-stroke:0;">18</span>
</section>
</div>
</body>
</html>
